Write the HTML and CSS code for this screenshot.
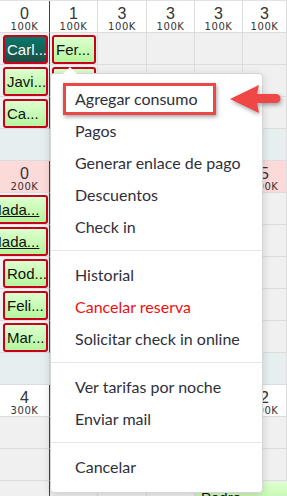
FILE: index.html
```html
<!DOCTYPE html>
<html lang="es">
<head>
    <meta charset="UTF-8">
    <meta name="viewport" content="width=device-width, initial-scale=1.0">
    <title>Calendario de reservas</title>
    <link rel="stylesheet" href="styles.css">
</head>
<body>
    <div class="board">
        <!-- semana 1 -->
        <div class="row head">
            <div class="cell today"><span class="num">0</span><span class="price">100K</span></div>
            <div class="cell"><span class="num">1</span><span class="price">100K</span></div>
            <div class="cell"><span class="num">3</span><span class="price">100K</span></div>
            <div class="cell"><span class="num">3</span><span class="price">100K</span></div>
            <div class="cell"><span class="num">3</span><span class="price">100K</span></div>
            <div class="cell"><span class="num">3</span><span class="price">100K</span></div>
        </div>
        <div class="row">
            <div class="cell today"><div class="res dark">Carl...</div></div>
            <div class="cell"><div class="res">Fer...</div></div>
            <div class="cell"></div><div class="cell"></div><div class="cell"></div><div class="cell"></div>
        </div>
        <div class="row">
            <div class="cell today"><div class="res">Javi...</div></div>
            <div class="cell"><div class="res"></div></div>
            <div class="cell"></div><div class="cell"></div><div class="cell"></div><div class="cell"></div>
        </div>
        <div class="row">
            <div class="cell today"><div class="res">Ca...</div></div>
            <div class="cell"></div><div class="cell"></div><div class="cell"></div><div class="cell"></div><div class="cell"></div>
        </div>
        <div class="row band">
            <div class="cell"></div><div class="cell"></div><div class="cell"></div><div class="cell"></div><div class="cell"></div><div class="cell"></div>
        </div>

        <!-- semana 2 -->
        <div class="row head">
            <div class="cell today busy"><span class="num">0</span><span class="price">200K</span></div>
            <div class="cell"></div>
            <div class="cell"></div>
            <div class="cell"></div>
            <div class="cell"></div>
            <div class="cell busy"><span class="num">5</span><span class="price">200K</span></div>
        </div>
        <div class="row">
            <div class="cell today"><div class="res cont"><u>Nada...</u></div></div>
            <div class="cell"></div><div class="cell"></div><div class="cell"></div><div class="cell"></div><div class="cell"></div>
        </div>
        <div class="row">
            <div class="cell today"><div class="res cont"><u>Nada...</u></div></div>
            <div class="cell"></div><div class="cell"></div><div class="cell"></div><div class="cell"></div><div class="cell"></div>
        </div>
        <div class="row">
            <div class="cell today"><div class="res">Rod...</div></div>
            <div class="cell"></div><div class="cell"></div><div class="cell"></div><div class="cell"></div><div class="cell"></div>
        </div>
        <div class="row">
            <div class="cell today"><div class="res">Feli...</div></div>
            <div class="cell"></div><div class="cell"></div><div class="cell"></div><div class="cell"></div><div class="cell"></div>
        </div>
        <div class="row">
            <div class="cell today"><div class="res">Mar...</div></div>
            <div class="cell"></div><div class="cell"></div><div class="cell"></div><div class="cell"></div><div class="cell"></div>
        </div>
        <div class="row band">
            <div class="cell"></div><div class="cell"></div><div class="cell"></div><div class="cell"></div><div class="cell"></div><div class="cell"></div>
        </div>

        <!-- semana 3 -->
        <div class="row head">
            <div class="cell today"><span class="num">4</span><span class="price">300K</span></div>
            <div class="cell"></div>
            <div class="cell"></div>
            <div class="cell"></div>
            <div class="cell"></div>
            <div class="cell"><span class="num">2</span><span class="price">300K</span></div>
        </div>
        <div class="row">
            <div class="cell today"></div>
            <div class="cell"></div><div class="cell"></div><div class="cell"></div><div class="cell"></div><div class="cell"></div>
        </div>
        <div class="row">
            <div class="cell today"></div>
            <div class="cell"></div><div class="cell"></div><div class="cell"></div><div class="cell"></div><div class="cell"></div>
        </div>
        <div class="row">
            <div class="cell today"></div>
            <div class="cell"></div><div class="cell"></div><div class="cell"></div>
            <div class="cell wide"><div class="res flat">Pedro</div></div>
        </div>
    </div>

    <div class="menu">
        <div class="item first">Agregar consumo<span class="mark"></span></div>
        <div class="item">Pagos</div>
        <div class="item">Generar enlace de pago</div>
        <div class="item">Descuentos</div>
        <div class="item">Check in</div>
        <div class="sep"></div>
        <div class="item">Historial</div>
        <div class="item danger">Cancelar reserva</div>
        <div class="item">Solicitar check in online</div>
        <div class="sep"></div>
        <div class="item">Ver tarifas por noche</div>
        <div class="item">Enviar mail</div>
        <div class="sep"></div>
        <div class="item">Cancelar</div>
    </div>

    <svg class="arrow" width="56" height="32" viewBox="0 0 56 32">
        <path d="M2 16 L31 2 L29 11 L48 11 A4.5 4.5 0 0 1 48 20 L29 20 L31 30 Z" fill="#ef4646"/>
    </svg>
</body>
</html>
```

FILE: styles.css
```css
body {
    margin: 0;
    padding: 0;
    overflow: hidden;
    background: #f0f0f0;
    font-family: "Liberation Sans", Arial, sans-serif;
    color: #333;
}
.board {
    border-top: 1px solid #e2e2e2;
}
.row {
    display: grid;
    grid-template-columns: 50px 48px 49px 48px 48px 1fr;
    height: 32px;
}
.cell {
    box-sizing: border-box;
    border-right: 1px solid #dcdcdc;
    border-bottom: 1px solid #dcdcdc;
    background: #f0f0f0;
    min-width: 0;
}
.cell.today {
    border-right-color: #d0021b;
}
.cell.wide {
    grid-column: span 2;
    border-right: none;
}
.head .cell {
    background: #fff;
    text-align: center;
    padding-top: 4px;
}
.head .cell.busy {
    background: #fddada;
}
.num {
    display: block;
    font-size: 16px;
    line-height: 17px;
}
.price {
    display: block;
    font-family: "DejaVu Sans", Verdana, sans-serif;
    font-size: 10px;
    line-height: 10px;
    letter-spacing: 0.6px;
}
.band .cell {
    background: #e6eef0;
}
.res {
    box-sizing: border-box;
    height: 29px;
    margin: 2px 1px 0 2px;
    padding-left: 2px;
    border: 2px solid #c8001c;
    border-radius: 3px;
    background: linear-gradient(#ddffcf, #b6f59d);
    font-size: 15px;
    line-height: 25px;
    color: #111;
    white-space: nowrap;
    overflow: hidden;
}
.today .res {
    margin-left: 3px;
}
.res.dark {
    background: linear-gradient(#08786a, #1e4d44);
    color: #fff;
}
.today .res.cont {
    margin-left: -14px;
    padding-left: 3px;
}
.res.flat {
    border: none;
    border-radius: 0;
    margin: 1px 0 0 0;
    padding: 6px 0 0 6px;
    line-height: 20px;
}
.menu {
    position: absolute;
    left: 50px;
    top: 73px;
    width: 213px;
    box-sizing: border-box;
    padding: 9px 0;
    background: #fff;
    border: 1px solid #d6d6d6;
    border-radius: 4px;
    box-shadow: 0 2px 8px rgba(0,0,0,0.15);
    font-family: Lato, "Open Sans", sans-serif;
    font-size: 16px;
    color: #2f2f3a;
}
.menu::before {
    content: "";
    position: absolute;
    left: 12px;
    top: -7px;
    border-left: 7px solid transparent;
    border-right: 7px solid transparent;
    border-bottom: 7px solid #fff;
}
.item {
    position: relative;
    height: 32px;
    line-height: 32px;
    padding-left: 24px;
    white-space: nowrap;
}
.item.danger {
    color: #f20d0d;
}
.sep {
    height: 1px;
    background: #e6e6e6;
    margin: 7px 0 8px;
}
.mark {
    position: absolute;
    left: 12px;
    top: 0;
    width: 153px;
    height: 32px;
    box-sizing: border-box;
    border: 3px solid #ea4848;
    box-shadow: 1px 2px 4px rgba(0,0,0,0.35);
}
.arrow {
    position: absolute;
    left: 228px;
    top: 83px;
    filter: drop-shadow(1px 2px 2px rgba(0,0,0,0.35));
}
```
